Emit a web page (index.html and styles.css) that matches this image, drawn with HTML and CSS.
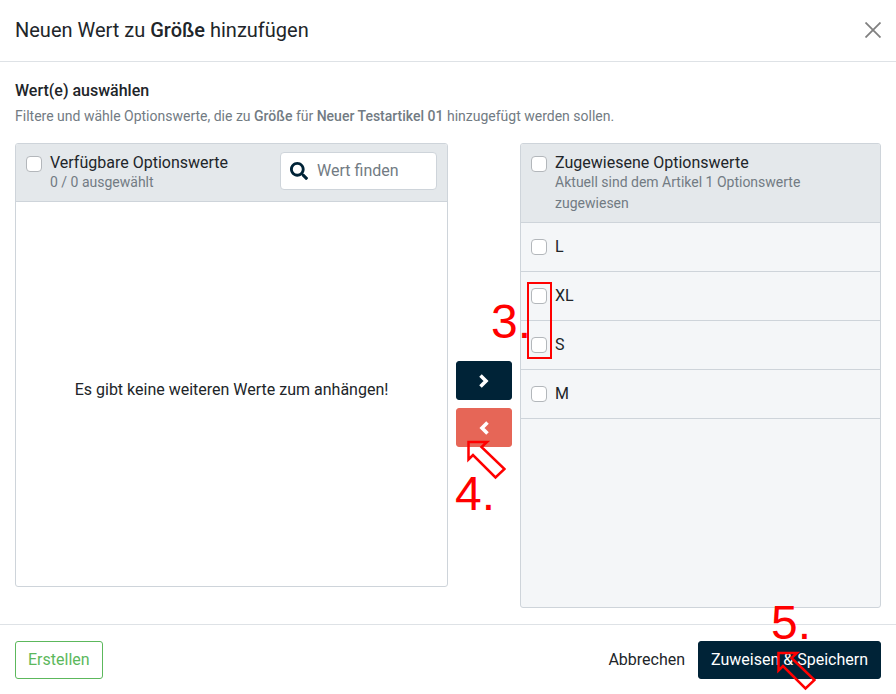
FILE: index.html
```html
<!DOCTYPE html>
<html lang="de">
<head>
<meta charset="utf-8">
<meta name="viewport" content="width=device-width, initial-scale=1">
<title>Neuen Wert zu Größe hinzufügen</title>
<link rel="stylesheet" href="styles.css">
</head>
<body>
<div class="modal" role="dialog" aria-labelledby="modal-title">
  <header class="modal-header">
    <h1 id="modal-title">Neuen Wert zu <strong>Größe</strong> hinzufügen</h1>
    <button class="close" type="button" aria-label="Schließen">
      <svg width="16" height="16" viewBox="0 0 16 16"><path d="M.5.5l15 15M15.5.5l-15 15" fill="none" stroke="#808080" stroke-width="1.8"/></svg>
    </button>
  </header>

  <main class="modal-body">
    <h2>Wert(e) auswählen</h2>
    <p class="hint">Filtere und wähle Optionswerte, die zu <strong>Größe</strong> für <strong>Neuer Testartikel 01</strong> hinzugefügt werden sollen.</p>

    <div class="transfer">
      <section class="panel">
        <div class="panel-header">
          <input type="checkbox" id="all-available">
          <div class="panel-title">
            <label for="all-available">Verfügbare Optionswerte</label>
            <small>0 / 0 ausgewählt</small>
          </div>
          <div class="search">
            <label for="search" aria-label="Wert finden">
              <svg width="18" height="18" viewBox="0 0 512 512"><path fill="#002337" d="M505 442.7L405.300 343c-4.500-4.500-10.600-7-17-7H372c27.600-35.300 44-79.700 44-128C416 93.100 322.900 0 208 0S0 93.100 0 208s93.100 208 208 208c48.300 0 92.700-16.400 128-44v16.300c0 6.400 2.500 12.500 7 17l99.700 99.700c9.400 9.400 24.600 9.400 33.900 0l28.300-28.300c9.400-9.400 9.400-24.600.1-34zM208 336c-70.700 0-128-57.200-128-128 0-70.700 57.200-128 128-128 70.700 0 128 57.200 128 128 0 70.700-57.200 128-128 128z"/></svg>
            </label>
            <input type="text" id="search" placeholder="Wert finden">
          </div>
        </div>
        <div class="panel-list empty">Es gibt keine weiteren Werte zum anhängen!</div>
      </section>

      <div class="actions">
        <button class="btn btn-dark move" type="button" aria-label="Zuweisen">
          <svg width="10" height="16" viewBox="0 0 10 16"><path d="M1.500 2.500L7 8l-5.500 5.500" fill="none" stroke="#fff" stroke-width="3.600"/></svg>
        </button>
        <button class="btn btn-danger move" type="button" aria-label="Entfernen">
          <svg width="10" height="16" viewBox="0 0 10 16"><path d="M8.500 2.500L3 8l5.500 5.500" fill="none" stroke="#fff" stroke-width="3.600"/></svg>
        </button>
      </div>

      <section class="panel assigned">
        <div class="panel-header">
          <input type="checkbox" id="all-assigned">
          <div class="panel-title">
            <label for="all-assigned">Zugewiesene Optionswerte</label>
            <small>Aktuell sind dem Artikel 1 Optionswerte zugewiesen</small>
          </div>
        </div>
        <ul class="panel-list">
          <li><input type="checkbox" id="opt-l"><label for="opt-l">L</label></li>
          <li><input type="checkbox" id="opt-xl"><label for="opt-xl">XL</label></li>
          <li><input type="checkbox" id="opt-s"><label for="opt-s">S</label></li>
          <li><input type="checkbox" id="opt-m"><label for="opt-m">M</label></li>
        </ul>
      </section>
    </div>
  </main>

  <footer class="modal-footer">
    <button class="btn btn-outline" type="button">Erstellen</button>
    <div class="footer-right">
      <button class="btn btn-link" type="button">Abbrechen</button>
      <button class="btn btn-dark" type="button">Zuweisen &amp; Speichern</button>
    </div>
  </footer>

  <span class="mark-box"></span>
  <span class="mark mark-3">3.</span>
  <span class="mark mark-4">4.</span>
  <span class="mark mark-5">5.</span>
  <svg class="arrow arrow-4" width="40" height="40" viewBox="0 0 40 40"><path d="M2.500 2H21L15.500 7L38.500 29L29.500 37.500L7 15L2.500 19.500Z"/></svg>
  <svg class="arrow arrow-5" width="40" height="40" viewBox="0 0 40 40"><path d="M2.500 2H21L15.500 7L38.500 29L29.500 37.500L7 15L2.500 19.500Z"/></svg>
</div>
</body>
</html>
```
FILE: styles.css
```css
* {
  box-sizing: border-box;
}

body {
  margin: 0;
  background: #fff;
  color: #212529;
  font: 16px/24px Roboto, sans-serif;
}

h1,
h2,
p,
ul {
  margin: 0;
  padding: 0;
}

strong {
  font-weight: 500;
}

button,
input {
  font: inherit;
}

svg {
  display: block;
}

.modal {
  position: relative;
}

.modal-header {
  display: flex;
  align-items: flex-start;
  justify-content: space-between;
  padding: 15px;
  border-bottom: 1px solid #dee2e6;
}

h1 {
  font-size: 20px;
  font-weight: 400;
  line-height: 31px;
}

.close {
  padding: 7px 0;
  border: 0;
  background: none;
}

.modal-body {
  padding: 16px 15px;
}

h2 {
  font-size: 16px;
  font-weight: 500;
  line-height: 26px;
}

.hint {
  margin: 2px 0 16px;
  color: #727b83;
  font-size: 14px;
  line-height: 21px;
}

.transfer {
  display: grid;
  grid-template-columns: 6fr 56px 5fr;
  gap: 8px;
  align-items: start;
}

.panel {
  min-width: 0;
  overflow: hidden;
  border: 1px solid #ced4da;
  border-radius: 3px;
}

.assigned {
  background: #f4f6f8;
}

.panel-header {
  display: flex;
  gap: 8px;
  align-items: flex-start;
  padding: 8px 10px;
  border-bottom: 1px solid #ced4da;
  background: #e4e8eb;
}

.panel-title {
  flex: 1;
  min-width: 0;
}

.panel-title label {
  display: block;
  height: 20px;
  line-height: 22px;
}

.panel-title small {
  display: block;
  color: #727b83;
  font-size: 14px;
  line-height: 21px;
}

input[type="checkbox"] {
  appearance: none;
  flex: none;
  width: 16px;
  height: 16px;
  margin: 0;
  border: 1px solid #b3b7bb;
  border-radius: 4px;
  background: #fff;
}

.panel-header input[type="checkbox"] {
  margin-top: 4px;
}

.search {
  display: flex;
  align-items: center;
  gap: 9px;
  width: 157px;
  height: 38px;
  padding: 0 9px;
  border: 1px solid #ced4da;
  border-radius: 4px;
  background: #fff;
}

.search input {
  flex: 1;
  min-width: 0;
  height: 24px;
  padding: 0;
  border: 0;
  outline: 0;
  background: none;
}

.search input::placeholder {
  color: #727b83;
  opacity: 1;
}

.panel-list {
  height: 384px;
  overflow: auto;
  list-style: none;
}

.empty {
  display: grid;
  place-items: center;
  padding-bottom: 8px;
}

.panel-list li {
  display: flex;
  align-items: center;
  gap: 8px;
  padding: 12px 10px;
  border-bottom: 1px solid #ced4da;
}

.actions {
  display: grid;
  gap: 8px;
  align-self: center;
  padding-top: 57px;
}

.btn {
  padding: 6px 12px;
  border: 1px solid transparent;
  border-radius: 3px;
  background: none;
  color: #212529;
  line-height: 24px;
}

.move {
  display: grid;
  place-items: center;
  height: 39px;
}

.btn-dark {
  border-color: #002337;
  background: #002337;
  color: #fff;
}

.btn-danger {
  border-color: #e66657;
  background: #e66657;
}

.btn-outline {
  border-color: #5cb85c;
  color: #5cb85c;
}

.modal-footer {
  display: flex;
  justify-content: space-between;
  padding: 16px 15px 15px;
  border-top: 1px solid #dee2e6;
}

.footer-right {
  display: flex;
}

/* Step markers laid over the dialog */
.mark,
.mark-box,
.arrow {
  position: absolute;
  pointer-events: none;
}

.mark {
  color: #f00;
  font: 48px/48px "Liberation Sans", sans-serif;
}

.mark-3 {
  top: 298px;
  left: 491px;
}

.mark-4 {
  top: 470px;
  left: 455px;
}

.mark-5 {
  top: 599px;
  left: 771px;
}

.mark-box {
  top: 282px;
  left: 527px;
  width: 25px;
  height: 77px;
  border: 2px solid #f00;
}

.arrow {
  fill: none;
  stroke: #f00;
  stroke-width: 2.5;
}

.arrow-4 {
  top: 440px;
  left: 466px;
}

.arrow-5 {
  top: 651px;
  left: 776px;
}
```
